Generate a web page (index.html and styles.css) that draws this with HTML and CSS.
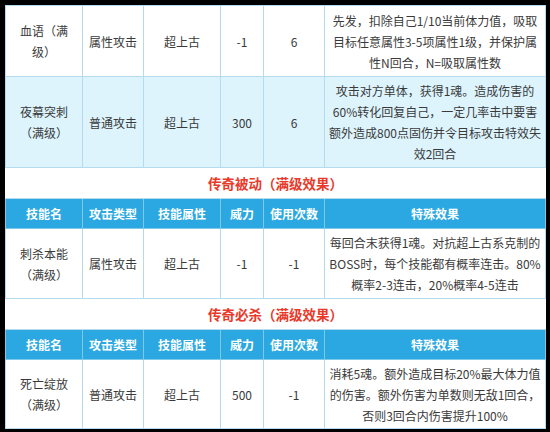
FILE: index.html
```html
<!DOCTYPE html>
<html lang="zh">
<head>
<meta charset="utf-8">
<link rel="stylesheet" href="styles.css">
</head>
<body>
<div class="frame">
<table class="skills">
  <colgroup>
    <col class="c-name"><col class="c-type"><col class="c-attr"><col class="c-pow"><col class="c-uses"><col class="c-eff">
  </colgroup>
  <tbody>
    <tr class="r1">
      <td>血语（满<br>级）</td><td>属性攻击</td><td>超上古</td><td>-1</td><td>6</td>
      <td class="eff">先发，扣除自己1/10当前体力值，吸取<br>目标任意属性3-5项属性1级，并保护属<br>性N回合，N=吸取属性数</td>
    </tr>
    <tr class="r2 alt">
      <td>夜幕突刺<br>（满级）</td><td>普通攻击</td><td>超上古</td><td>300</td><td>6</td>
      <td class="eff">攻击对方单体，获得1魂。造成伤害的<br>60%转化回复自己，一定几率击中要害<br>额外造成800点固伤并令目标攻击特效失<br>效2回合</td>
    </tr>
    <tr class="title">
      <td colspan="6">传奇被动（满级效果）</td>
    </tr>
    <tr class="head">
      <th>技能名</th><th>攻击类型</th><th>技能属性</th><th>威力</th><th>使用次数</th><th>特殊效果</th>
    </tr>
    <tr class="r3">
      <td>刺杀本能<br>（满级）</td><td>属性攻击</td><td>超上古</td><td>-1</td><td>-1</td>
      <td class="eff">每回合末获得1魂。对抗超上古系克制的<br>BOSS时，每个技能都有概率连击。80%<br>概率2-3连击，20%概率4-5连击</td>
    </tr>
    <tr class="title">
      <td colspan="6">传奇必杀（满级效果）</td>
    </tr>
    <tr class="head">
      <th>技能名</th><th>攻击类型</th><th>技能属性</th><th>威力</th><th>使用次数</th><th>特殊效果</th>
    </tr>
    <tr class="r4">
      <td>死亡绽放<br>（满级）</td><td>普通攻击</td><td>超上古</td><td>500</td><td>-1</td>
      <td class="eff">消耗5魂。额外造成目标20%最大体力值<br>的伤害。额外伤害为单数则无敌1回合，<br>否则3回合内伤害提升100%</td>
    </tr>
  </tbody>
</table>
</div>
</body>
</html>
```
FILE: styles.css
```css
html, body {
  margin: 0;
  padding: 0;
  background: #000;
}
.frame {
  width: 550px;
  height: 432px;
  box-sizing: border-box;
  padding: 5px 5px 5px 5px;
  overflow: hidden;
}
.skills {
  width: 540px;
  border-collapse: collapse;
  table-layout: fixed;
  background: #fff;
  font-family: "Microsoft YaHei", "Noto Sans CJK SC", sans-serif;
  font-size: 12px;
  line-height: 21px;
  color: #3a3a3a;
}
.c-name { width: 77px; }
.c-type { width: 61px; }
.c-attr { width: 77px; }
.c-pow { width: 43px; }
.c-uses { width: 61px; }
.c-eff { width: 221px; }
.skills td, .skills th {
  border: 1px solid #b5dcee;
  text-align: center;
  vertical-align: middle;
  padding: 0 4px;
}
.skills td.eff {
  padding: 0 2px;
  white-space: nowrap;
}
.r1 { height: 71px; }
.r2 { height: 91px; }
.r3 { height: 70px; }
.r4 { height: 69px; }
.alt td { background: #ddf4fd; }
.title td {
  height: 30px;
  color: #e8392b;
  font-size: 13.5px;
  font-weight: bold;
  border-left: none;
  border-right: none;
  padding: 0;
}
.head th {
  height: 29px;
  background: #2ba8e1;
  color: #fff;
  font-weight: bold;
  border-color: #7ec8ea;
}
```
